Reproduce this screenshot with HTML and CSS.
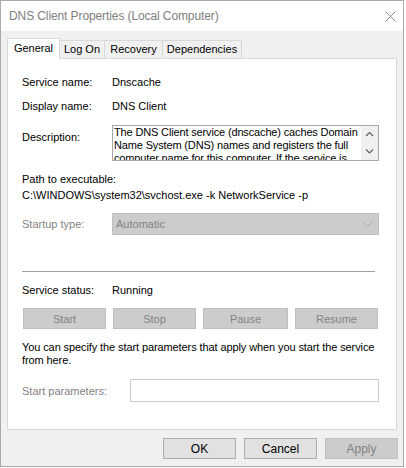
FILE: index.html
```html
<!DOCTYPE html>
<html>
<head>
<meta charset="utf-8">
<link rel="stylesheet" href="styles.css">
</head>
<body>
<div class="window">
  <div class="titlebar">
    <span class="title">DNS Client Properties (Local Computer)</span>
    <svg class="close" width="11" height="11" viewBox="0 0 11 11"><path d="M0.5 0.5 L10.5 10.5 M10.5 0.5 L0.5 10.5" stroke="#8a8a8a" stroke-width="1" fill="none"/></svg>
  </div>
  <div class="client">
    <div class="tabs">
      <div class="tab active t-general">General</div>
      <div class="tab t-logon">Log On</div>
      <div class="tab t-recovery">Recovery</div>
      <div class="tab t-deps">Dependencies</div>
    </div>
    <div class="panel">
      <div class="row r-name"><span class="lbl">Service name:</span><span>Dnscache</span></div>
      <div class="row r-display"><span class="lbl">Display name:</span><span>DNS Client</span></div>
      <div class="row r-desc">
        <span class="lbl lbl-desc">Description:</span>
        <div class="descbox">
          <div class="desctext">
            <span class="dl">The DNS Client service (dnscache) caches Domain</span>
            <span class="dl">Name System (DNS) names and registers the full</span>
            <span class="dl">computer name for this computer. If the service is</span>
          </div>
          <div class="vscroll">
            <svg width="17" height="17" viewBox="0 0 17 17"><path d="M5 10 L8.5 6.5 L12 10" stroke="#606060" stroke-width="1.2" fill="none"/></svg>
            <svg width="17" height="17" viewBox="0 0 17 17"><path d="M5 6.5 L8.5 10 L12 6.5" stroke="#606060" stroke-width="1.2" fill="none"/></svg>
          </div>
        </div>
      </div>
      <div class="pathlbl">Path to executable:</div>
      <div class="pathval">C:\WINDOWS\system32\svchost.exe -k NetworkService -p</div>
      <div class="row r-startup">
        <span class="lbl disabled">Startup type:</span>
        <div class="combo"><span>Automatic</span>
          <svg width="11" height="7" viewBox="0 0 11 7"><path d="M0.5 0.5 L5.5 5.5 L10.5 0.5" stroke="#a8a8a8" stroke-width="1" fill="none"/></svg>
        </div>
      </div>
      <div class="separator"></div>
      <div class="row r-status"><span class="lbl">Service status:</span><span>Running</span></div>
      <div class="svcbtns">
        <button class="btn dis b-start">Start</button>
        <button class="btn dis b-stop">Stop</button>
        <button class="btn dis b-pause">Pause</button>
        <button class="btn dis b-resume">Resume</button>
      </div>
      <div class="hint">You can specify the start parameters that apply when you start the service<br>from here.</div>
      <div class="row r-params">
        <span class="lbl lbl-params disabled">Start parameters:</span>
        <div class="paraminput"></div>
      </div>
    </div>
    <div class="footer">
      <button class="btn fbtn">OK</button>
      <button class="btn fbtn">Cancel</button>
      <button class="btn fbtn dis">Apply</button>
    </div>
  </div>
</div>
</body>
</html>
```

FILE: styles.css
```css
* { box-sizing: border-box; }
html, body { margin: 0; padding: 0; background: #ffffff; }
body {
  font-family: "Liberation Sans", Arial, sans-serif;
  font-size: 11px;
  color: #000000;
}
.window {
  width: 404px;
  height: 467px;
  border: 1px solid #aaaaaa;
  background: #f0f0f0;
  display: flex;
  flex-direction: column;
}
.titlebar {
  height: 30px;
  background: #ffffff;
  display: flex;
  align-items: center;
  justify-content: space-between;
  padding-left: 8px;
  padding-right: 7px;
  flex: none;
}
.title {
  font-size: 12px;
  color: #808080;
  letter-spacing: -0.1px;
}
.close { display: block; }
.client {
  padding: 7px 6px 0 6px;
}
.tabs {
  height: 20px;
  display: flex;
  align-items: flex-end;
  position: relative;
  z-index: 1;
}
.tab {
  height: 18px;
  border: 1px solid #d9d9d9;
  border-bottom: none;
  background: #f0f0f0;
  text-align: center;
  line-height: 17px;
  margin-left: -1px;
}
.tab.active {
  height: 21px;
  margin-bottom: -1px;
  background: #ffffff;
  margin-left: 0;
  line-height: 19px;
  position: relative;
  z-index: 2;
}
.t-general { width: 53px; }
.t-logon { width: 46px; }
.t-recovery { width: 59px; }
.t-deps { width: 80px; }
.panel {
  width: 390px;
  height: 372px;
  border: 1px solid #d9d9d9;
  background: #ffffff;
  padding: 15px 0 0 14px;
}
.row {
  display: flex;
  align-items: center;
  line-height: 16px;
}
.lbl { width: 90px; flex: none; }
.disabled { color: #838383; }
.r-display { margin-top: 8px; }
.r-desc { margin-top: 11px; align-items: flex-start; }
.lbl-desc { padding-top: 4px; }
.descbox {
  width: 267px;
  height: 36px;
  border: 1px solid #a9a9a9;
  display: flex;
  background: #ffffff;
}
.desctext {
  flex: 1;
  line-height: 13px;
  padding-left: 1px;
  overflow: hidden;
  letter-spacing: -0.15px;
}
.dl { display: block; white-space: nowrap; }
.vscroll {
  width: 17px;
  flex: none;
  background: #f0f0f0;
  display: flex;
  flex-direction: column;
}
.vscroll svg { display: block; }
.pathlbl { margin-top: 10px; line-height: 16px; }
.pathval { line-height: 16px; }
.r-startup { margin-top: 10px; }
.combo {
  width: 267px;
  height: 22px;
  border: 1px solid #bfbfbf;
  background: #cccccc;
  color: #838383;
  display: flex;
  align-items: center;
  justify-content: space-between;
  padding: 0 5px 0 3px;
}
.combo svg { display: block; }
.separator {
  margin-top: 36px;
  width: 353px;
  height: 1px;
  background: #a0a0a0;
}
.r-status { margin-top: 10px; }
.svcbtns {
  margin-top: 10px;
  display: flex;
  gap: 7px;
  padding-left: 1px;
}
.btn {
  font-family: "Liberation Sans", Arial, sans-serif;
  font-size: 11px;
  height: 21px;
  border: 1px solid #adadad;
  background: #e1e1e1;
  color: #000000;
  padding: 0;
  margin: 0;
}
.btn.dis {
  background: #cccccc;
  border-color: #bfbfbf;
  color: #838383;
}
.b-start, .b-stop, .b-resume { width: 83px; }
.b-pause { width: 85px; }
.hint {
  margin-top: 12px;
  line-height: 13px;
  letter-spacing: -0.1px;
}
.r-params { margin-top: 12px; }
.lbl-params { width: 108px; }
.paraminput {
  width: 249px;
  height: 23px;
  border: 1px solid #cccccc;
  background: #ffffff;
}
.footer {
  margin-top: 8px;
  display: flex;
  justify-content: flex-end;
  gap: 8px;
  margin-right: -1px;
}
.fbtn { width: 73px; font-size: 12px; }
```
